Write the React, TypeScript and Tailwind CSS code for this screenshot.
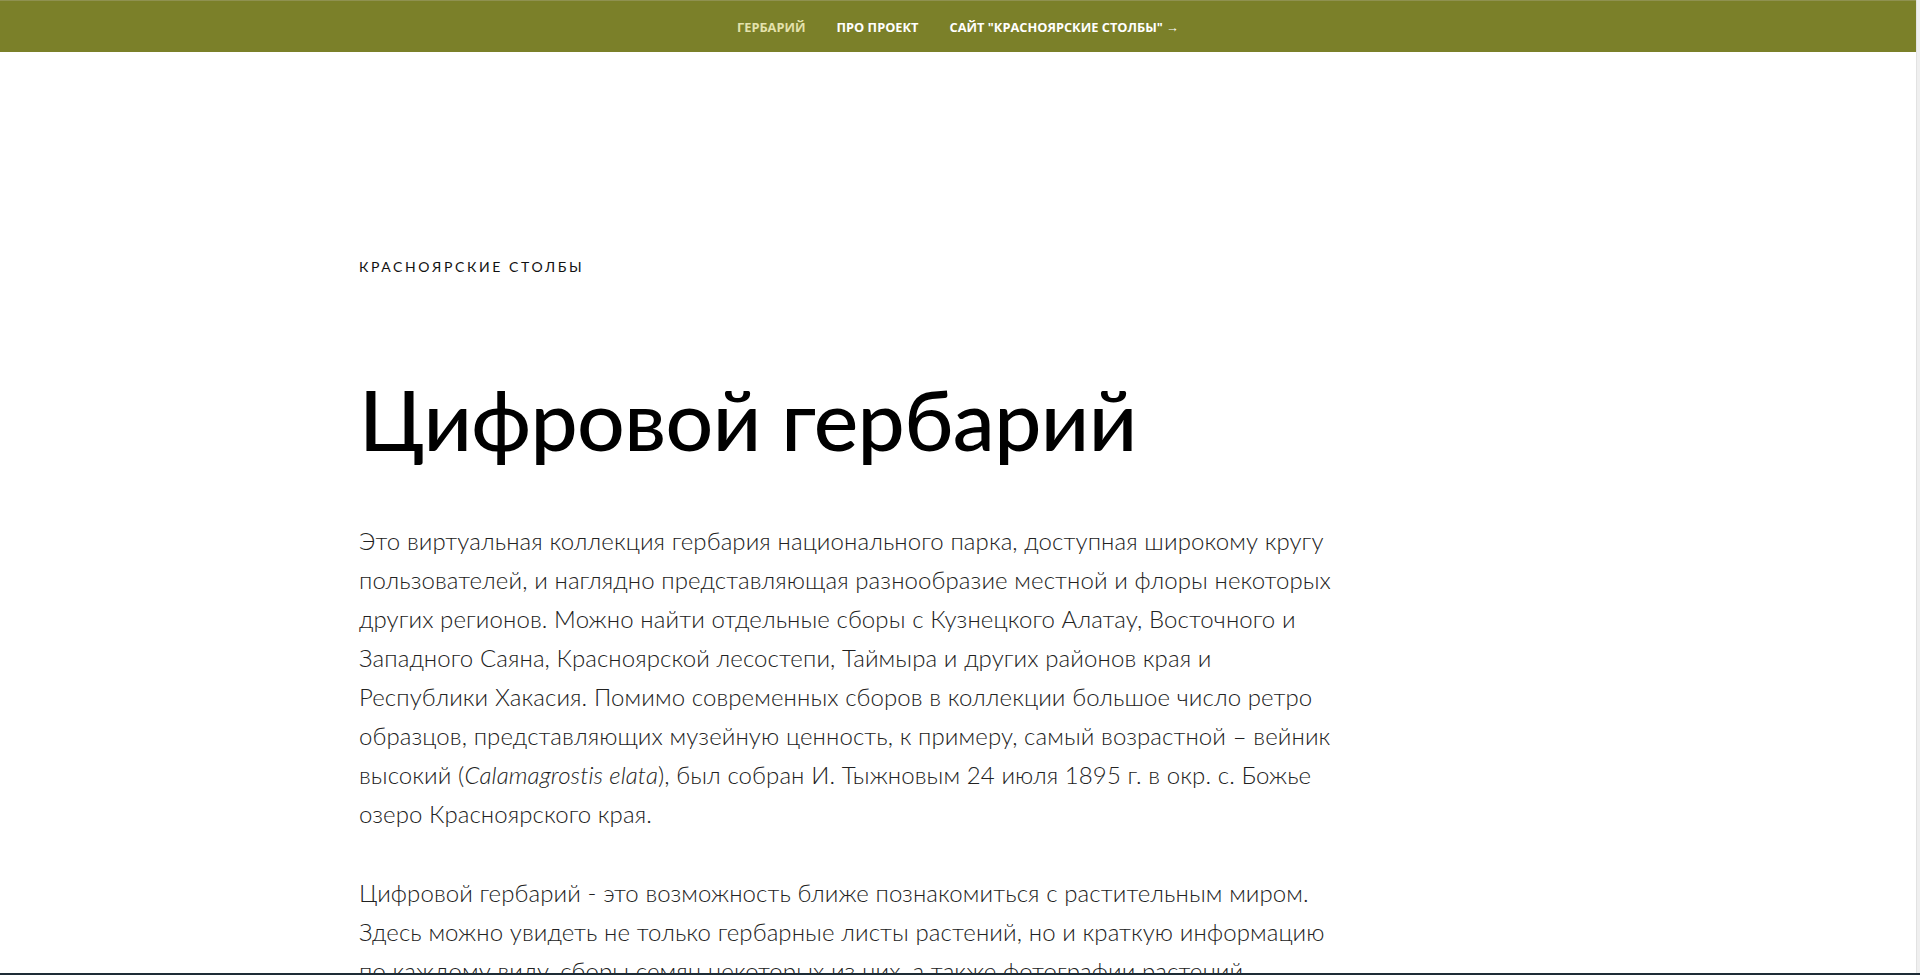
const navItems = [
  { label: "Гербарий", active: true },
  { label: "Про проект", active: false },
  { label: 'Сайт "Красноярские Столбы" →', active: false },
];

const firstParagraph = [
  "Это виртуальная коллекция гербария национального парка, доступная широкому кругу",
  "пользователей, и наглядно представляющая разнообразие местной и флоры некоторых",
  "других регионов. Можно найти отдельные сборы с Кузнецкого Алатау, Восточного и",
  "Западного Саяна, Красноярской лесостепи, Таймыра и других районов края и",
  "Республики Хакасия. Помимо современных сборов в коллекции большое число ретро",
  "образцов, представляющих музейную ценность, к примеру, самый возрастной – вейник",
];

const secondParagraph = [
  "Цифровой гербарий - это возможность ближе познакомиться с растительным миром.",
  "Здесь можно увидеть не только гербарные листы растений, но и краткую информацию",
  "по каждому виду, сборы семян некоторых из них, а также фотографии растений.",
];

function Lines({ lines }: { lines: string[] }) {
  return (
    <>
      {lines.map((line, i) => (
        <span key={i} className="block whitespace-nowrap">
          {line}
        </span>
      ))}
    </>
  );
}

export default function App() {
  return (
    <div className="h-[975px] w-full overflow-hidden bg-white flex flex-col font-['Lato',sans-serif]">
      <div className="flex flex-1 min-h-0">
        <div className="flex-1 flex flex-col min-w-0">
          <nav className="h-[52px] shrink-0 pt-[3px] bg-[#7b8029] border-t border-[#8f9150] flex items-center justify-center gap-[31px]">
            {navItems.map((item) => (
              <a
                key={item.label}
                className={`text-[12.8px] font-bold uppercase font-['Open_Sans',sans-serif] ${
                  item.active ? "text-[#e4e2ad]" : "text-white"
                }`}
              >
                {item.label}
              </a>
            ))}
          </nav>

          <main className="pl-[359px] pt-[204px]">
            <div className="text-[14px] leading-[22px] uppercase tracking-[2.6px] text-[#111]">
              Красноярские столбы
            </div>

            <h1 className="mt-[99px] text-[84px] leading-[84px] font-medium text-black tracking-[-0.6px]">
              Цифровой гербарий
            </h1>

            <div className="mt-[60px] w-[980px] text-[24px] leading-[39px] font-light tracking-[0.1px] text-[#222]">
              <p>
                <Lines lines={firstParagraph} />
                <span className="block whitespace-nowrap">
                  высокий (<em>Calamagrostis elata</em>), был собран И. Тыжновым
                  24 июля 1895 г. в окр. с. Божье
                </span>
                <span className="block">озеро Красноярского края.</span>
              </p>
              <p className="mt-[40px]">
                <Lines lines={secondParagraph} />
              </p>
            </div>
          </main>
        </div>
        <div className="w-[4px] bg-[#efefef] border-l border-[#e2e2e2]" />
      </div>
      <div className="h-[2px] bg-[#1e2c36] shrink-0" />
    </div>
  );
}
